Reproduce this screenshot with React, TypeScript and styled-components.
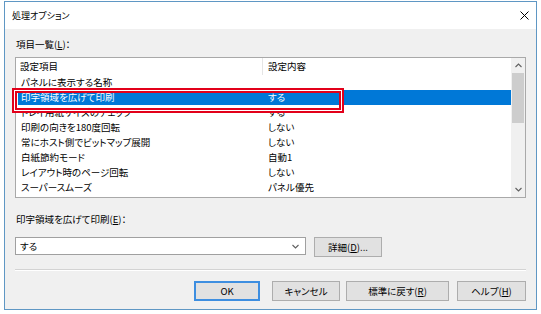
import React from 'react';
import styled, { createGlobalStyle } from 'styled-components';

const GlobalStyle = createGlobalStyle`
  html, body {
    margin: 0;
    padding: 0;
    background: #ffffff;
  }
  body {
    font-family: "Noto Sans CJK JP", "Noto Sans", sans-serif;
    font-feature-settings: "palt";
    font-size: 9.5px;
    color: #000000;
  }
`;

const Page = styled.div`
  padding: 1px 0 0 4px;
`;

const Dialog = styled.div`
  box-sizing: border-box;
  width: 533px;
  height: 309px;
  border: 1px solid #5f97c4;
  display: flex;
  flex-direction: column;
  background: #f0f0f0;
`;

const TitleBar = styled.div`
  height: 27px;
  background: #ffffff;
  display: flex;
  align-items: center;
  justify-content: space-between;
  padding: 0 6px 0 7px;
  font-size: 9px;
  line-height: 14px;
`;

const CloseIcon = styled.svg`
  width: 9px;
  height: 9px;
  margin-right: 1px;
`;

const Body = styled.div`
  flex: 1;
  display: flex;
  flex-direction: column;
  padding: 0 10px;
`;

const FieldLabel = styled.div<{ $mt: number }>`
  margin-top: ${(p) => p.$mt}px;
  line-height: 14px;
  height: 14px;
  padding-left: 1px;
`;

const Key = styled.span`
  text-decoration: underline;
`;

const ListBox = styled.div`
  position: relative;
  box-sizing: border-box;
  margin-top: 6px;
  height: 141px;
  border: 1px solid #a9a9a9;
  background: #ffffff;
  display: flex;
`;

const ListMain = styled.div`
  flex: 1;
  display: flex;
  flex-direction: column;
`;

const HeaderRow = styled.div`
  height: 17px;
  display: flex;
  align-items: center;
`;

const HeaderCell = styled.div<{ $w?: number }>`
  box-sizing: border-box;
  width: ${(p) => (p.$w ? `${p.$w}px` : 'auto')};
  flex: ${(p) => (p.$w ? 'none' : '1')};
  padding-left: ${(p) => (p.$w ? 4 : 5)}px;
  line-height: 17px;
  border-right: ${(p) => (p.$w ? '1px solid #e5e5e5' : 'none')};
`;

const Row = styled.div<{ $sel?: boolean }>`
  height: 15px;
  margin-left: 2px;
  display: flex;
  align-items: center;
  background: ${(p) => (p.$sel ? '#0078d7' : 'transparent')};
  color: ${(p) => (p.$sel ? '#ffffff' : '#000000')};
`;

const Cell = styled.div<{ $w?: number }>`
  box-sizing: border-box;
  width: ${(p) => (p.$w ? `${p.$w}px` : 'auto')};
  flex: ${(p) => (p.$w ? 'none' : '1')};
  padding-left: 3px;
  line-height: 15px;
  white-space: nowrap;
  overflow: hidden;
`;

const ScrollBar = styled.div`
  width: 14px;
  background: #f0f0f0;
  display: flex;
  flex-direction: column;
  align-items: center;
`;

const ArrowBox = styled.div`
  height: 15px;
  width: 100%;
  display: flex;
  align-items: center;
  justify-content: center;
`;

const Thumb = styled.div`
  width: 12px;
  height: 50px;
  background: #cdcdcd;
`;

const Track = styled.div`
  flex: 1;
`;

const Highlight = styled.div`
  position: absolute;
  left: -4px;
  top: 30px;
  width: 332px;
  height: 25px;
  box-sizing: border-box;
  border: 2px solid #e2001a;
  box-shadow: inset 0 0 0 1px #ffffff, inset 0 0 0 3px #e2001a;
  pointer-events: none;
`;

const ComboRow = styled.div`
  margin-top: 11px;
  height: 20px;
  display: flex;
  align-items: flex-start;
`;

const Combo = styled.div`
  box-sizing: border-box;
  width: 291px;
  height: 18px;
  border: 1px solid #a0a0a0;
  background: #ffffff;
  display: flex;
  align-items: center;
  justify-content: space-between;
  padding: 0 6px 0 4px;
  line-height: 16px;
`;

const Separator = styled.div`
  margin-top: 12px;
  height: 1px;
  background: #d3d3d3;
  border-bottom: 1px solid #ffffff;
`;

const ButtonRow = styled.div`
  margin-top: 10px;
  display: flex;
  justify-content: flex-end;
`;

const Button = styled.button<{ $w: number; $ml?: number; $default?: boolean }>`
  box-sizing: border-box;
  width: ${(p) => p.$w}px;
  height: 20px;
  margin-left: ${(p) => p.$ml ?? 0}px;
  padding: 0;
  font: inherit;
  color: #000000;
  background: #e1e1e1;
  border: ${(p) => (p.$default ? '2px solid #3d8ee0' : '1px solid #adadad')};
  line-height: 16px;
`;

const Chevron: React.FC<{ up?: boolean }> = ({ up }) => (
  <svg width="7" height="5" viewBox="0 0 7 5">
    <polyline
      points={up ? '0.5,4 3.5,1 6.5,4' : '0.5,1 3.5,4 6.5,1'}
      fill="none"
      stroke="#606060"
      strokeWidth="1.1"
    />
  </svg>
);

const rows: [string, string][] = [
  ['パネルに表示する名称', ''],
  ['印字領域を広げて印刷', 'する'],
  ['トレイ用紙サイズのチェック', 'する'],
  ['印刷の向きを180度回転', 'しない'],
  ['常にホスト側でビットマップ展開', 'しない'],
  ['白紙節約モード', '自動1'],
  ['レイアウト時のページ回転', 'しない'],
  ['スーパースムーズ', 'パネル優先'],
];

const App: React.FC = () => {
  return (
    <Page>
      <GlobalStyle />
      <Dialog>
        <TitleBar>
          <span>処理オプション</span>
          <CloseIcon viewBox="0 0 9 9">
            <path d="M0.5 0.5 L8.5 8.5 M8.5 0.5 L0.5 8.5" stroke="#000" strokeWidth="1" />
          </CloseIcon>
        </TitleBar>
        <Body>
          <FieldLabel $mt={8}>
            項目一覧(<Key>L</Key>)：
          </FieldLabel>
          <ListBox>
            <ListMain>
              <HeaderRow>
                <HeaderCell $w={247}>設定項目</HeaderCell>
                <HeaderCell>設定内容</HeaderCell>
              </HeaderRow>
              {rows.map(([name, value], i) => (
                <Row key={name} $sel={i === 1}>
                  <Cell $w={247}>{name}</Cell>
                  <Cell>{value}</Cell>
                </Row>
              ))}
            </ListMain>
            <ScrollBar>
              <ArrowBox>
                <Chevron up />
              </ArrowBox>
              <Thumb />
              <Track />
              <ArrowBox>
                <Chevron />
              </ArrowBox>
            </ScrollBar>
            <Highlight />
          </ListBox>
          <FieldLabel $mt={14}>
            印字領域を広げて印刷(<Key>E</Key>)：
          </FieldLabel>
          <ComboRow>
            <Combo>
              <span>する</span>
              <Chevron />
            </Combo>
            <Button $w={68} $ml={8}>
              詳細(<Key>D</Key>)...
            </Button>
          </ComboRow>
          <Separator />
          <ButtonRow>
            <Button $w={66} $default>
              OK
            </Button>
            <Button $w={68} $ml={12}>
              キャンセル
            </Button>
            <Button $w={103} $ml={6}>
              標準に戻す(<Key>R</Key>)
            </Button>
            <Button $w={69} $ml={8}>
              ヘルプ(<Key>H</Key>)
            </Button>
          </ButtonRow>
        </Body>
      </Dialog>
    </Page>
  );
};

export default App;
